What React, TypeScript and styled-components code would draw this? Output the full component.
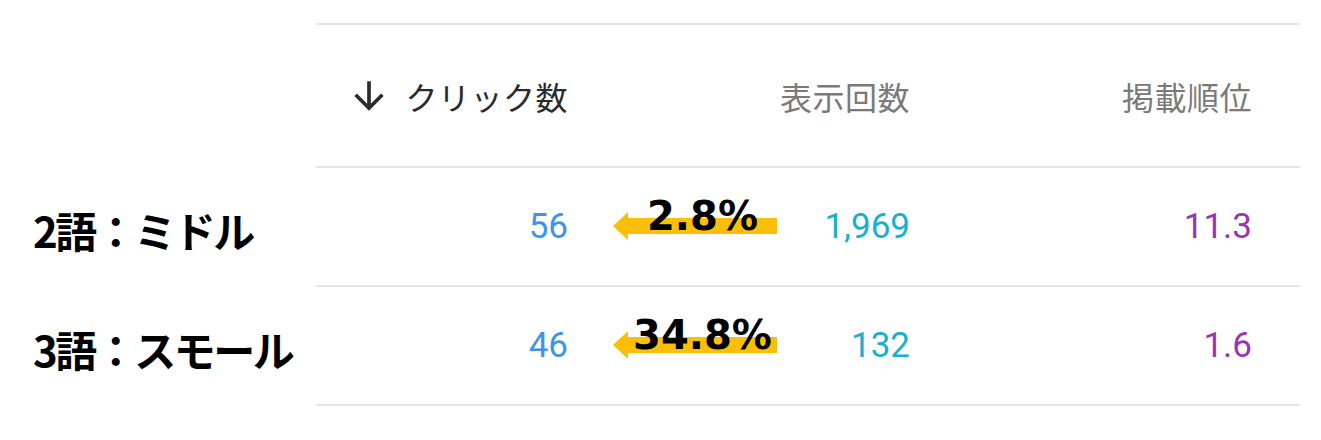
import React from "react";
import styled, { createGlobalStyle } from "styled-components";

const GlobalStyle = createGlobalStyle`
  html, body {
    margin: 0;
    padding: 0;
    background: #ffffff;
  }
  body {
    font-family: Roboto, "Noto Sans CJK JP", sans-serif;
  }
`;

const Page = styled.div`
  padding-top: 23px;
  width: 1321px;
`;

const Row = styled.div`
  display: flex;
  align-items: stretch;
`;

const Label = styled.div`
  width: 316px;
  flex-shrink: 0;
  display: flex;
  align-items: center;
  padding-left: 33px;
  box-sizing: border-box;
  font-family: "Noto Sans CJK JP", sans-serif;
  font-weight: 700;
  font-size: 42px;
  letter-spacing: -2.5px;
  color: #000;
  white-space: nowrap;
  padding-top: 4px;
`;

const Cells = styled.div<{ $head?: boolean }>`
  display: grid;
  grid-template-columns: 300px 342px 342px;
  box-sizing: border-box;
  height: ${(p) => (p.$head ? "145px" : "119px")};
  border-bottom: 2px solid #e6e6e6;
  border-top: ${(p) => (p.$head ? "2px solid #e6e6e6" : "none")};
`;

const HeadCell = styled.div<{ $active?: boolean }>`
  display: flex;
  align-items: center;
  justify-content: flex-end;
  padding-right: 48px;
  font-family: "Noto Sans CJK JP", sans-serif;
  font-weight: 400;
  font-size: 32px;
  color: ${(p) => (p.$active ? "#2b2b2b" : "#7a7a7a")};
  letter-spacing: 0.5px;
`;

const SortIcon = styled.svg`
  width: 44px;
  height: 44px;
  margin-right: 14px;
  flex-shrink: 0;
`;

const Cell = styled.div<{ $color: string }>`
  position: relative;
  display: flex;
  align-items: center;
  justify-content: flex-end;
  padding-right: 48px;
  font-family: Roboto, sans-serif;
  font-size: 35px;
  color: ${(p) => p.$color};
`;

const Note = styled.div`
  position: absolute;
  left: -3px;
  top: 50%;
  margin-top: -16px;
  width: 164px;
  height: 30px;
`;

const NoteArrow = styled.svg`
  position: absolute;
  inset: 0;
`;

const NoteText = styled.span`
  position: absolute;
  left: 15px;
  right: 0;
  top: -15px;
  text-align: center;
  font-family: "DejaVu Sans", Verdana, sans-serif;
  font-weight: 700;
  font-size: 40px;
  line-height: 40px;
  color: #000;
  white-space: nowrap;
`;

const colors = {
  clicks: "#3b95e9",
  impressions: "#17b0cf",
  position: "#9a34b6",
};

type Item = {
  label: string;
  clicks: string;
  ratio: string;
  impressions: string;
  position: string;
};

const rows: Item[] = [
  { label: "2語：ミドル", clicks: "56", ratio: "2.8%", impressions: "1,969", position: "11.3" },
  { label: "3語：スモール", clicks: "46", ratio: "34.8%", impressions: "132", position: "1.6" },
];

const App = () => {
  return (
    <Page>
      <GlobalStyle />
      <Row>
        <Label />
        <Cells $head>
          <HeadCell $active>
            <SortIcon viewBox="0 0 24 24">
              <path
                fill="#2b2b2b"
                d="M20 12l-1.41-1.41L13 16.17V4h-2v12.17l-5.58-5.59L4 12l8 8 8-8z"
              />
            </SortIcon>
            クリック数
          </HeadCell>
          <HeadCell>表示回数</HeadCell>
          <HeadCell>掲載順位</HeadCell>
        </Cells>
      </Row>
      {rows.map((r) => (
        <Row key={r.label}>
          <Label>{r.label}</Label>
          <Cells>
            <Cell $color={colors.clicks}>{r.clicks}</Cell>
            <Cell $color={colors.impressions}>
              <Note>
                <NoteArrow viewBox="0 0 164 30" width="164" height="30">
                  <polygon
                    fill="#fbbf0a"
                    points="0,15 15,1 15,7 164,7 164,23 15,23 15,29"
                  />
                </NoteArrow>
                <NoteText>{r.ratio}</NoteText>
              </Note>
              {r.impressions}
            </Cell>
            <Cell $color={colors.position}>{r.position}</Cell>
          </Cells>
        </Row>
      ))}
    </Page>
  );
};

export default App;
